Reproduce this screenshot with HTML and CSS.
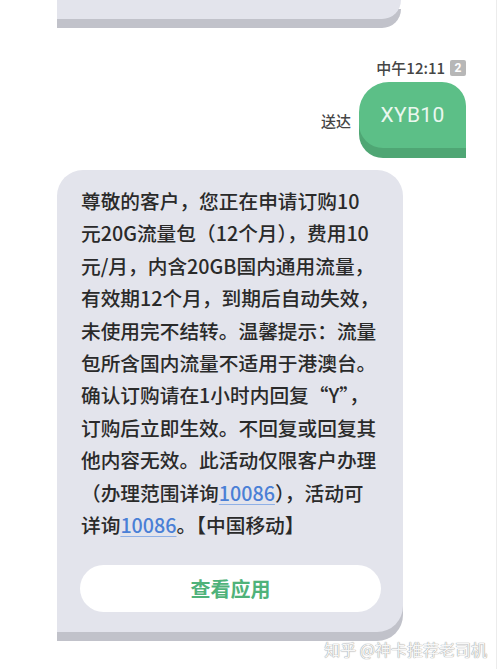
FILE: index.html
```html
<!DOCTYPE html>
<html lang="zh-CN">
<head>
<meta charset="utf-8">
<title>短信</title>
<link rel="stylesheet" href="styles.css">
</head>
<body>
<div class="screen">
  <div class="prev-bubble"></div>

  <div class="time-row">
    <span class="time">中午12:11</span><span class="sim">2</span>
  </div>

  <div class="sent-row">
    <span class="status">送达</span>
    <div class="green-bubble">XYB10</div>
  </div>

  <div class="msg-bubble">
    <div class="msg-text">
      <div class="ln">尊敬的客户，您正在申请订购10</div>
      <div class="ln">元20G流量包（12个月），费用10</div>
      <div class="ln">元/月，内含20GB国内通用流量，</div>
      <div class="ln">有效期12个月，到期后自动失效，</div>
      <div class="ln">未使用完不结转。温馨提示：流量</div>
      <div class="ln">包所含国内流量不适用于港澳台。</div>
      <div class="ln">确认订购请在1小时内回复“Y”，</div>
      <div class="ln">订购后立即生效。不回复或回复其</div>
      <div class="ln">他内容无效。此活动仅限客户办理</div>
      <div class="ln">（办理范围详询<span class="link">10086</span>），活动可</div>
      <div class="ln">详询<span class="link">10086</span>。【中国移动】</div>
    </div>
    <div class="app-btn">查看应用</div>
  </div>

  <div class="watermark">知乎 @神卡推荐老司机</div>
</div>
</body>
</html>
```

FILE: styles.css
```css
html, body {
  margin: 0;
  padding: 0;
  background: #ffffff;
}

body {
  font-family: "Noto Sans CJK SC", "Noto Sans", sans-serif;
}

.screen {
  width: 496px;
  height: 669px;
  border-right: 1px solid #ececec;
  display: flex;
  flex-direction: column;
  overflow: hidden;
}

.prev-bubble {
  margin-left: 57px;
  width: 344px;
  height: 19px;
  background: #e3e4ec;
  border-bottom-right-radius: 22px;
  box-shadow: 0 9px 0 #c1c2ca;
  flex: none;
}

.time-row {
  margin-top: 40px;
  display: flex;
  justify-content: flex-end;
  align-items: center;
  padding-right: 30px;
  height: 18px;
}

.time {
  font-size: 15px;
  line-height: 18px;
  font-weight: 500;
  color: #454545;
}

.sim {
  margin-left: 5px;
  width: 16px;
  height: 16px;
  background: #b7b7b7;
  border-radius: 2px;
  color: #ffffff;
  font-size: 12px;
  font-weight: 700;
  line-height: 16px;
  text-align: center;
  font-family: "Roboto", "Noto Sans", sans-serif;
}

.sent-row {
  margin-top: 5px;
  display: flex;
  justify-content: flex-end;
  align-items: flex-end;
  padding-right: 30px;
}

.status {
  font-size: 15px;
  line-height: 18px;
  font-weight: 500;
  color: #454545;
  margin-right: 8px;
  margin-bottom: 18px;
}

.green-bubble {
  width: 107px;
  height: 66px;
  background: #5cbf87;
  border-radius: 30px 24px 0 24px;
  box-shadow: 0 10px 0 #4fa674;
  color: #eaf7ef;
  font-family: "Roboto", "Noto Sans", sans-serif;
  font-size: 21px;
  line-height: 66px;
  text-align: center;
  padding-bottom: 2px;
  box-sizing: border-box;
  letter-spacing: 0.3px;
}

.msg-bubble {
  margin-top: 22px;
  margin-left: 57px;
  width: 346px;
  box-sizing: border-box;
  padding: 15px 22px 20px 23px;
  background: #e3e4ec;
  border-radius: 26px 26px 26px 0;
  box-shadow: 0 9px 0 #c1c2ca;
  flex: none;
}

.msg-text {
  padding-left: 1px;
  color: #2a2a2a;
  font-size: 19.7px;
  font-weight: 500;
  line-height: 32.4px;
}

.ln {
  white-space: nowrap;
}

.link {
  color: #4a7fd6;
  text-decoration: underline;
  text-decoration-color: #8fb0e6;
  text-underline-offset: 3px;
}

.app-btn {
  margin-top: 24px;
  height: 47px;
  border-radius: 24px;
  background: #ffffff;
  color: #4fb27a;
  font-size: 20px;
  font-weight: 700;
  line-height: 47px;
  text-align: center;
}

.watermark {
  margin-top: 8px;
  align-self: flex-end;
  margin-right: 9px;
  font-size: 16px;
  line-height: 18px;
  color: #f7f7f7;
  text-shadow: 0 0 1px #9a9a9a, 0 0 1px #9a9a9a;
}
```
